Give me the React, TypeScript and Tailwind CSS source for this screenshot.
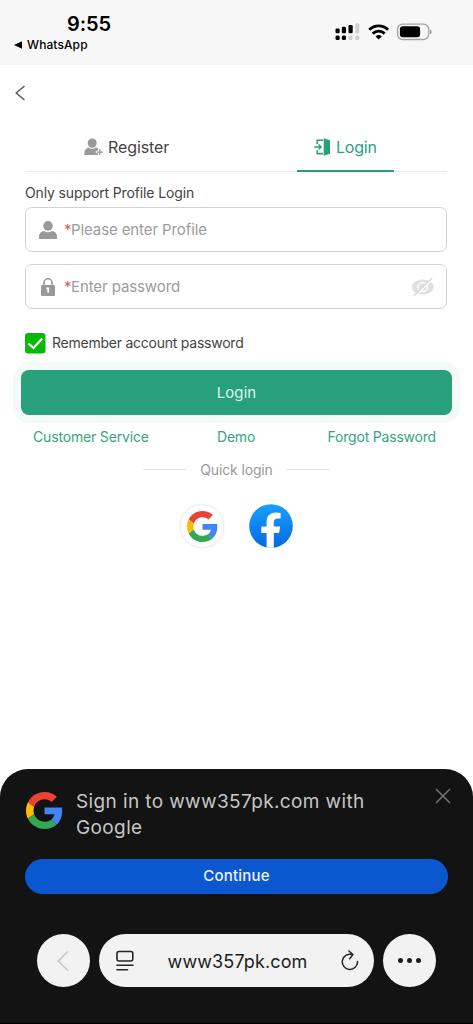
import type { ReactNode } from "react";

interface IconProps {
  className?: string;
}

const GoogleIcon = ({ className }: IconProps) => (
  <svg viewBox="0 0 48 48" className={className}>
    <path fill="#EA4335" d="M24 9.5c3.54 0 6.71 1.22 9.21 3.6l6.85-6.85C35.9 2.38 30.47 0 24 0 14.62 0 6.51 5.38 2.56 13.22l7.98 6.19C12.43 13.72 17.74 9.5 24 9.5z" />
    <path fill="#4285F4" d="M46.98 24.55c0-1.57-.15-3.09-.38-4.55H24v9.02h12.94c-.58 2.96-2.26 5.48-4.78 7.18l7.73 6c4.51-4.18 7.09-10.36 7.09-17.65z" />
    <path fill="#FBBC05" d="M10.53 28.59c-.48-1.45-.76-2.99-.76-4.59s.27-3.14.76-4.59l-7.98-6.19C.92 16.46 0 20.12 0 24s.92 7.54 2.56 10.78l7.97-6.19z" />
    <path fill="#34A853" d="M24 48c6.48 0 11.93-2.13 15.89-5.81l-7.73-6c-2.15 1.45-4.92 2.3-8.16 2.3-6.26 0-11.57-4.22-13.47-9.91l-7.98 6.19C6.51 42.62 14.62 48 24 48z" />
  </svg>
);

const FacebookIcon = ({ className }: IconProps) => (
  <svg viewBox="0 0 44 44" className={className}>
    <defs>
      <linearGradient id="fb" x1="0" y1="0" x2="0" y2="1">
        <stop offset="0" stopColor="#18a0fb" />
        <stop offset="1" stopColor="#0868e0" />
      </linearGradient>
    </defs>
    <circle cx="22" cy="22" r="21.8" fill="url(#fb)" />
    <path fill="#fff" d="M17.6 43.4V29h-5.300v-6.500h5.300v-4.200c0-6.300 3.500-9.700 9.300-9.700 1.700 0 3.400.2 4.700.5v5.400h-2.800c-3 0-4 1.500-4 3.900v4.100h6.400l-1.200 6.500h-5.200v14.400a22 22 0 0 1-7.200 0z" />
  </svg>
);

const StatusIcons = () => (
  <svg viewBox="0 0 98 20" className="h-5 w-[98px]">
    <g fill="#000">
      <rect x="0.500" y="7.500" width="4.200" height="4.800" rx="1.300" />
      <rect x="6.800" y="5.800" width="4.200" height="6.500" rx="1.300" />
      <rect x="13.500" y="4" width="4.200" height="8.300" rx="1.300" />
      <rect x="0.500" y="14.500" width="4.200" height="4.400" rx="1.500" />
      <rect x="6.800" y="14.500" width="4.200" height="4.400" rx="1.500" />
    </g>
    <g fill="#cfcfcf">
      <rect x="20.300" y="2.300" width="4" height="10" rx="1.300" />
      <rect x="13.500" y="14.500" width="4" height="4.400" rx="1.500" />
      <rect x="20.300" y="14.500" width="4" height="4.400" rx="1.500" />
    </g>
    <g fill="none" stroke="#000" strokeWidth="2.900">
      <path d="M34.300 8.800a13.200 13.200 0 0 1 18.800 0" />
      <path d="M37.700 12.600a8.500 8.500 0 0 1 12 0" />
    </g>
    <path d="M43.700 18.600l-3.100-3.200a4.500 4.500 0 0 1 6.200 0z" />
    <rect x="62.600" y="3.100" width="31" height="15.400" rx="5" fill="none" stroke="#a4a4a4" strokeWidth="1.300" />
    <rect x="64.900" y="5.300" width="20.200" height="11" rx="3" />
    <path d="M95 8.400c2 .7 2 4.100 0 4.800z" fill="#8c8c8c" />
  </svg>
);

const RegisterIcon = () => (
  <svg viewBox="0 0 20 18" className="h-[18px] w-5" fill="#999">
    <ellipse cx="8.200" cy="5.100" rx="4.500" ry="4.700" />
    <path d="M.3 17c0-4.800 1.500-7 4.300-7.600 1.900 1.900 5.300 1.900 7.200 0 .9.100 1.700.5 2.200 1v2.400h-2.200v2.500h2.200V17z" />
    <path d="M15.200 11h1.300v2.400h2.600v1.300h-2.600v2.500h-1.300v-2.500h-2.600v-1.300h2.600z" />
  </svg>
);

const LoginIcon = () => (
  <svg viewBox="0 0 17 18" className="h-[18px] w-[17px]">
    <path d="M9 2.200H3.200V6M3.200 12.200v3.400H9" fill="none" stroke="#28a17b" strokeWidth="1.600" />
    <path d="M.2 9h6.600M4.600 6.500 7.100 9l-2.500 2.500" fill="none" stroke="#28a17b" strokeWidth="1.500" />
    <path d="M9.700.3 16 2.200v13.500L9.700 17.700z" fill="#28a17b" />
  </svg>
);

const UserIcon = () => (
  <svg viewBox="0 0 18 18" className="h-[18px] w-[18px]" fill="#999">
    <circle cx="9" cy="4.900" r="4.800" />
    <path d="M0 18v-2.500c0-3.200 2.200-5.200 5-5.600 2.300 1.700 5.700 1.700 8 0 2.800.4 5 2.400 5 5.600V18z" />
  </svg>
);

const LockIcon = () => (
  <svg viewBox="0 0 14 18" className="h-[18px] w-[14px]">
    <path d="M3 8V4.800a4 4 0 0 1 8 0V8" fill="none" stroke="#999" strokeWidth="1.600" />
    <rect y="7" width="14" height="11" rx="1" fill="#999" />
    <path d="M5.500 9.600h2.600v4.900H6.300v-3.300h-.8z" fill="#fff" />
  </svg>
);

const EyeOffIcon = () => (
  <svg viewBox="0 0 24 20" className="h-5 w-6">
    <ellipse cx="11.800" cy="10" rx="11" ry="7.600" fill="#dfdfdf" />
    <circle cx="11.800" cy="10" r="4.600" fill="none" stroke="#fff" strokeWidth="1.500" />
    <path d="M4.200 19.300 21.800 2" stroke="#fff" strokeWidth="1.700" />
    <path d="M3 18.600 21.200 1" stroke="#dadada" strokeWidth="1.600" />
  </svg>
);

interface FieldProps {
  icon: ReactNode;
  placeholder: string;
  trailing?: ReactNode;
}

const Field = ({ icon, placeholder, trailing }: FieldProps) => (
  <div className="flex h-[45px] items-center rounded-[7px] border border-[#d2d2d2] pr-[11px] text-[15px] text-[#9c9c9c]">
    <span className="ml-[13px] flex w-[18px] justify-center">{icon}</span>
    <span className="ml-[7px] w-[7px] pt-px text-[#dc5b50]">*</span>
    <span className="flex-1 pt-px tracking-[-0.1px] whitespace-nowrap">{placeholder}</span>
    {trailing}
  </div>
);

export default function App() {
  return (
    <div className="flex h-[1024px] w-[473px] flex-col overflow-hidden bg-white font-['Inter',sans-serif] text-[#444]">
      <header className="flex h-[65px] justify-between bg-[#f7f7f7] text-black">
        <div className="pt-[12px]">
          <div className="pl-[67px] text-[20px] leading-6 font-semibold tracking-[-0.1px]">9:55</div>
          <div className="flex items-center pt-px pl-[14px] text-[12px] leading-4 font-medium">
            <svg viewBox="0 0 8 8" className="mr-[5px] h-2 w-2"><path d="M0 4 8 .3v7.400z" /></svg>
            <span className="tracking-[0.1px]">WhatsApp</span>
          </div>
        </div>
        <div className="pt-[21px] pr-[40px]"><StatusIcons /></div>
      </header>

      <main className="flex h-[704px] flex-col">
        <div className="pt-[20px] pl-[15px]">
          <svg viewBox="0 0 10 16" className="h-4 w-[10px]" fill="none" stroke="#555" strokeWidth="1.400">
            <path d="M9.500 1 1.200 8l8.300 7" />
          </svg>
        </div>

        <nav className="mx-[26px] mt-[21px] flex h-[50px] border-b border-[#e9e9e9] text-[16px]">
          <div className="flex w-[211px] items-center pl-[58px]">
            <RegisterIcon />
            <span className="ml-[4px] tracking-[-0.1px]">Register</span>
          </div>
          <div className="flex w-[210px] pl-[60px]">
            <div className="flex h-[50px] w-[97px] items-center border-b-2 border-[#28a17b] pt-px pl-[17px] text-[#28a17b]">
              <LoginIcon />
              <span className="ml-[5px] tracking-[-0.2px]">Login</span>
            </div>
          </div>
        </nav>

        <section className="px-[25px] pt-[11px]">
          <p className="text-[14px] leading-5 tracking-[-0.13px]">Only support Profile Login</p>
          <div className="mt-[4px] mr-px flex flex-col gap-[12px]">
            <Field icon={<UserIcon />} placeholder="Please enter Profile" />
            <Field icon={<LockIcon />} placeholder="Enter password" trailing={<EyeOffIcon />} />
          </div>
          <div className="mt-[24px] flex h-[21px] items-center text-[14px]">
            <svg viewBox="0 0 21 21" className="mr-[6px] h-[21px] w-[21px]">
              <rect width="20.500" height="20.500" rx="3" fill="#08b908" />
              <path d="m3.500 10.500 5 4.500 8.600-9.500" fill="none" stroke="#fff" strokeWidth="2.200" />
            </svg>
            <span className="pb-[2px] tracking-[-0.24px]">Remember account password</span>
          </div>
        </section>

        <button className="mx-[21px] mt-[16px] h-[45px] shrink-0 rounded-[8px] bg-[#28a17b] pt-[2px] text-[15px] tracking-[0.1px] text-[#dcf5ec] ring-8 ring-[#f4faf8]">
          Login
        </button>

        <div className="mt-[12px] flex h-5 justify-between pr-[37px] pl-[33px] text-[14px] leading-5 text-[#36a47f]">
          <span className="w-[184px] tracking-[-0.17px]">Customer Service</span>
          <span className="flex-1 tracking-[-0.2px]">Demo</span>
          <span className="tracking-[-0.2px]">Forgot Password</span>
        </div>

        <div className="mt-[12px] flex h-5 items-center justify-center gap-[13px] text-[14px] text-[#999]">
          <span className="h-px w-11 bg-[#e4e4e4]" />
          <span className="tracking-[-0.15px]">Quick login</span>
          <span className="h-px w-11 bg-[#e4e4e4]" />
        </div>

        <div className="mt-[25px] flex justify-center gap-[25px]">
          <div className="flex h-11 w-11 items-center justify-center rounded-full border border-[#eee] bg-white shadow-[0_0_3px_#eeeeee]">
            <GoogleIcon className="h-[31px] w-[31px]" />
          </div>
          <FacebookIcon className="h-11 w-11" />
        </div>
      </main>

      <footer className="h-[255px] rounded-t-[28px] border-b border-black bg-[#131313]">
        <div className="flex h-[90px] pt-[20px] pl-[26px]">
          <GoogleIcon className="mt-[3px] h-[37px] w-[37px]" />
          <p className="ml-[13px] w-[359px] text-[19px] leading-[26px] tracking-[0.38px] text-[#c6c6c6]">
            Sign in to www357pk.com with
            <br />
            Google
          </p>
          <svg viewBox="0 0 16 16" className="-mt-px h-4 w-4" stroke="#747474" strokeWidth="1.500">
            <path d="m1 1 14 14M15 1 1 15" />
          </svg>
        </div>
        <button className="mx-[25px] flex h-[35px] w-[423px] items-center justify-center rounded-full bg-[#0b57d0] text-[15px] font-medium tracking-[0.2px] text-[#f0f4fc]">
          Continue
        </button>
        <div className="mt-[40px] flex gap-[9px] pl-[37px] text-[#1c1c1c]">
          <div className="flex h-[53px] w-[53px] items-center justify-center rounded-full bg-[#f2f2f2] pr-[2px]">
            <svg viewBox="0 0 12 20" className="h-5 w-3" fill="none" stroke="#c4c4c4" strokeWidth="1.500">
              <path d="M11 .500 1.200 10 11 19.500" />
            </svg>
          </div>
          <div className="flex h-[53px] w-[275px] items-center rounded-full bg-[#f2f2f2] pr-[15px] pl-[17px]">
            <svg viewBox="0 0 18 22" className="h-[22px] w-[18px]" fill="none" stroke="#242424" strokeWidth="1.600" strokeLinecap="round">
              <rect x="1" y="1.500" width="15.800" height="9.500" rx="2" />
              <path d="M1 15.200h16M1 19.800h10.500" />
            </svg>
            <span className="flex-1 pt-[2px] text-center text-[18px] tracking-[0.12px] whitespace-nowrap">
              www357pk.com
            </span>
            <svg viewBox="0 0 18 22" className="h-[22px] w-[18px]" fill="none" stroke="#242424" strokeWidth="1.500" strokeLinecap="round">
              <path d="M16.500 11.500A7.600 7.600 0 1 1 11.500 4.700M8 1 11.900 4.600 8.700 8.700" />
            </svg>
          </div>
          <div className="flex h-[53px] w-[53px] items-center justify-center gap-[4px] rounded-full bg-[#f2f2f2]">
            <span className="h-[5px] w-[5px] rounded-full bg-[#1c1c1c]" />
            <span className="h-[5px] w-[5px] rounded-full bg-[#1c1c1c]" />
            <span className="h-[5px] w-[5px] rounded-full bg-[#1c1c1c]" />
          </div>
        </div>
      </footer>
    </div>
  );
}
